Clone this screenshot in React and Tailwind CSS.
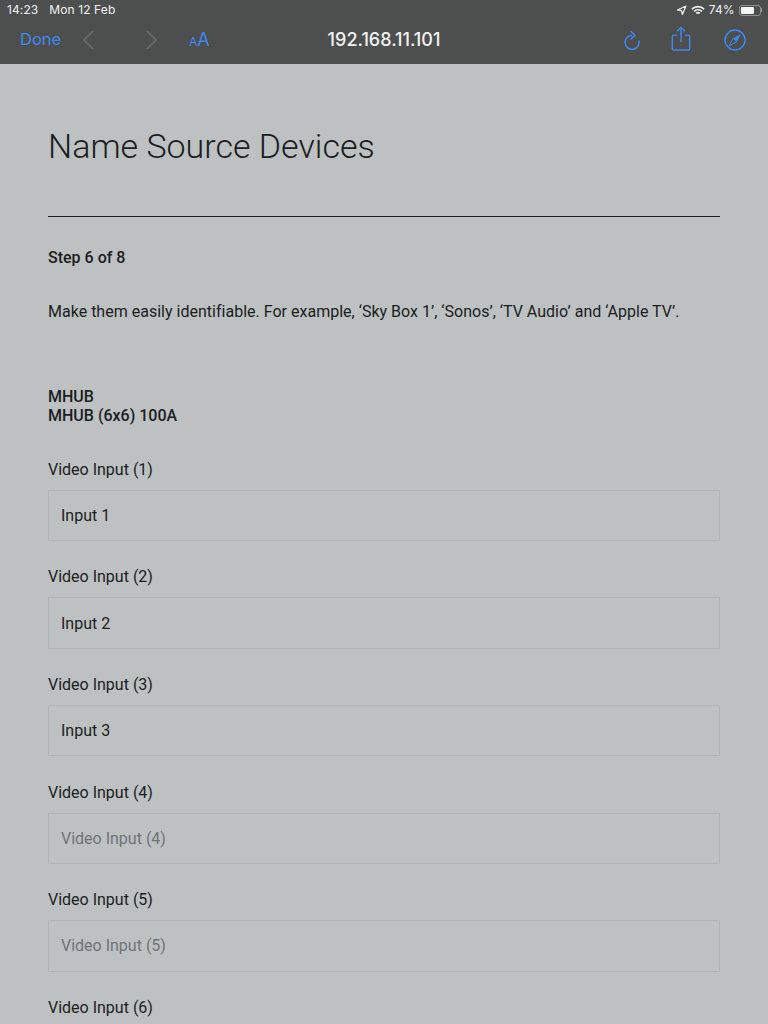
const inputs = [
    { label: "Video Input (1)", value: "Input 1" },
    { label: "Video Input (2)", value: "Input 2" },
    { label: "Video Input (3)", value: "Input 3" },
    { label: "Video Input (4)", value: "" },
    { label: "Video Input (5)", value: "" },
    { label: "Video Input (6)", value: "" },
];

const App = () => {
    return (
        <div className="h-[1024px] overflow-hidden bg-[#bdc1c2] text-[#1b1d1e] font-['Roboto',sans-serif]">
            <header className="h-16 bg-[#4d4f4f] flex flex-col font-['Inter',sans-serif]">
                <div className="h-[19px] pt-px pl-[7px] pr-[6px] flex items-center justify-between text-[12px] text-[#f2f2f2]">
                    <div className="flex gap-[11px] tracking-[0.1px]">
                        <span>14:23</span>
                        <span>Mon 12 Feb</span>
                    </div>
                    <div className="flex items-center">
                        <svg width="11" height="11" viewBox="0 0 11 11" fill="none" stroke="#f2f2f2" strokeWidth="1.2" strokeLinejoin="round">
                            <path d="M10 1 1.500 5l4 .6L6.400 9.500z" />
                        </svg>
                        <svg className="ml-[4px]" width="14" height="11" viewBox="0 0 15 11" fill="none" stroke="#f2f2f2" strokeWidth="1.800">
                            <path d="M1 4a9.200 9.200 0 0 1 13 0" />
                            <path d="M3.300 6.400a6 6 0 0 1 8.400 0" />
                            <path d="M5.600 8.600a2.700 2.700 0 0 1 3.800 0" />
                        </svg>
                        <span className="ml-[4px]">74%</span>
                        <div className="ml-[4px] flex items-center">
                            <div className="w-[22px] h-[11px] rounded-[3px] border border-[#8f9191] p-px">
                                <div className="h-full w-[76%] rounded-[1px] bg-[#f6f6f6]" />
                            </div>
                            <div className="w-[1.5px] h-1 bg-[#8f9191]" />
                        </div>
                    </div>
                </div>
                <div className="relative flex-1 flex items-center pl-5 pr-[22px] pb-[4px]">
                    <span className="text-[16.5px] text-[#4088ee] w-[62px]">Done</span>
                    <svg width="12" height="20" viewBox="0 0 12 20" fill="none" stroke="#6b6e6e" strokeWidth="1.600">
                        <path d="M11 1 2 10l9 9" />
                    </svg>
                    <svg className="ml-[52px]" width="12" height="20" viewBox="0 0 12 20" fill="none" stroke="#6b6e6e" strokeWidth="1.600">
                        <path d="m1 1 9 9-9 9" />
                    </svg>
                    <span className="ml-[31px] text-[#4088ee] text-[18px] leading-none">
                        <span className="text-[12px]">A</span>A
                    </span>
                    <span className="absolute left-0 right-0 text-center text-[18px] font-medium text-[#f2f2f2]">192.168.11.101</span>
                    <div className="ml-auto flex items-center">
                        <svg width="16" height="20" viewBox="0 0 16 20" fill="none" stroke="#4088ee" strokeWidth="1.500">
                            <path d="M8 5.300a7 7 0 1 0 6.800 5.200" />
                            <path d="M6.500 1 11 5.400 6.500 9.500" />
                        </svg>
                        <svg className="ml-[31px] -mt-[2px]" width="20" height="25" viewBox="0 0 20 26" fill="none" stroke="#4088ee" strokeWidth="1.500">
                            <path d="M6 9.500H2.500a1.500 1.500 0 0 0-1.500 1.500v12.500a1.500 1.500 0 0 0 1.500 1.500h15a1.500 1.500 0 0 0 1.500-1.500V11a1.500 1.500 0 0 0-1.500-1.500H14" />
                            <path d="M10 17V1.500M6 5.500l4-4 4 4" />
                        </svg>
                        <svg className="ml-[33px]" width="22" height="22" viewBox="0 0 22 22" fill="none">
                            <circle cx="11" cy="11" r="10" stroke="#4088ee" strokeWidth="1.500" />
                            <path d="M17 5 12.800 12.800 9.200 9.200z" fill="#4088ee" />
                            <path d="M5 17 9.200 9.200 12.800 12.800z" fill="none" stroke="#4088ee" />
                        </svg>
                    </div>
                </div>
            </header>

            <main className="px-12">
                <h1 className="pt-[62px] text-[34px] leading-10 font-light">Name Source Devices</h1>
                <hr className="mt-[50px] border-[#1b1d1e]" />
                <p className="mt-[31px] leading-[19px] font-medium">Step 6 of 8</p>
                <p className="mt-[35px] leading-[19px] tracking-[0.01px]">
                    Make them easily identifiable. For example, ‘Sky Box 1’, ‘Sonos’, ‘TV Audio’ and ‘Apple TV’.
                </p>
                <p className="mt-[66px] leading-[19px] font-medium">
                    MHUB
                    <br />
                    MHUB (6x6) 100A
                </p>
                <form className="mt-[34.800px] flex flex-col gap-[26.100px]">
                    {inputs.map((item) => (
                        <label key={item.label} className="block">
                            <span className="block leading-[19px] mb-[11px]">{item.label}</span>
                            <input
                                type="text"
                                readOnly
                                value={item.value}
                                placeholder={item.label}
                                className="block w-full h-[51.500px] px-3 border border-[#b0b4b5] bg-transparent text-[#1b1d1e] placeholder:text-[#6e7478] outline-none"
                            />
                        </label>
                    ))}
                </form>
            </main>
        </div>
    );
};

export default App;
